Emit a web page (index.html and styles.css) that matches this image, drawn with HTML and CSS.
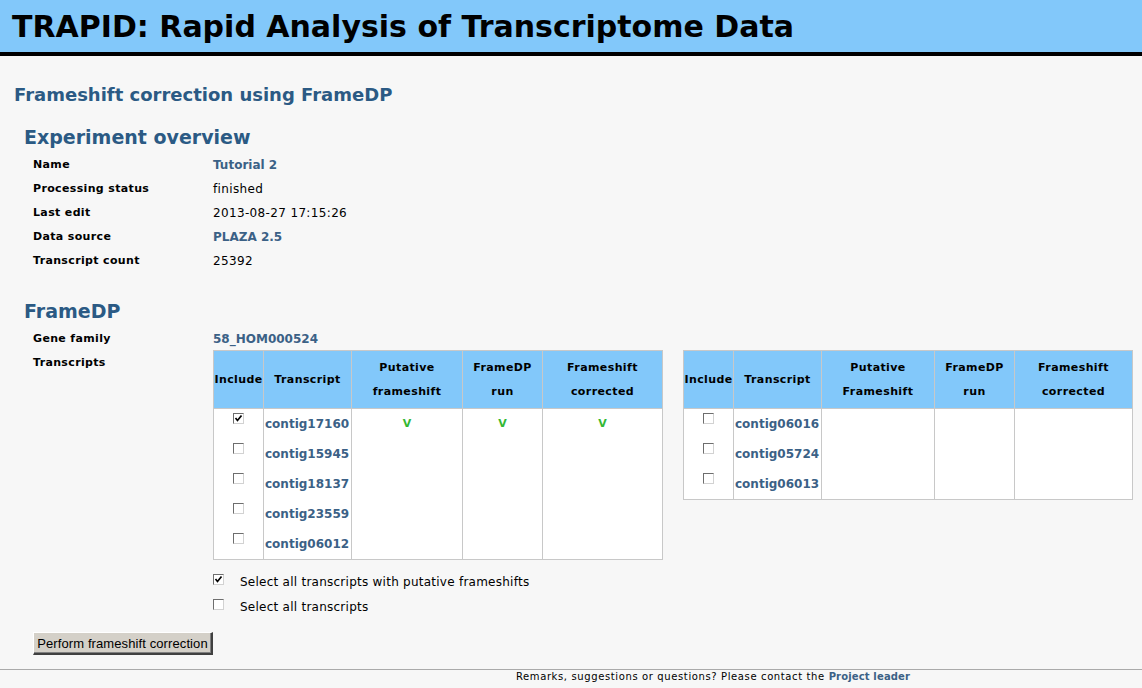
FILE: index.html
```html
<!DOCTYPE html>
<html>
<head>
<meta charset="utf-8">
<title>TRAPID</title>
<link rel="stylesheet" href="styles.css">
</head>
<body>
<div class="header"><h1 class="title">TRAPID: Rapid Analysis of Transcriptome Data</h1></div>
<div class="content">
  <h2 class="page-title">Frameshift correction using FrameDP</h2>
  <h3 class="section-title">Experiment overview</h3>
  <div class="info">
    <div class="label">Name</div><div class="value"><a class="link">Tutorial 2</a></div>
    <div class="label">Processing status</div><div class="value">finished</div>
    <div class="label">Last edit</div><div class="value">2013-08-27 17:15:26</div>
    <div class="label">Data source</div><div class="value"><a class="link">PLAZA 2.5</a></div>
    <div class="label">Transcript count</div><div class="value">25392</div>
  </div>
  <h3 class="section-title fdp">FrameDP</h3>
  <div class="info">
    <div class="label">Gene family</div><div class="value"><a class="link">58_HOM000524</a></div>
    <div class="label">Transcripts</div>
    <div class="value tables-cell">
      <div class="tables">
        <table class="tx">
          <colgroup><col class="c1"><col class="c2"><col class="c3a"><col class="c4"><col class="c5a"></colgroup>
          <thead><tr><th>Include</th><th>Transcript</th><th>Putative<br>frameshift</th><th>FrameDP<br>run</th><th>Frameshift<br>corrected</th></tr></thead>
          <tbody>
            <tr><td class="inc"><span class="cb checked"><svg viewBox="0 0 9 9" width="9" height="9"><path d="M1.5 4 L3.5 6.5 L7.5 1.5" fill="none" stroke="#000" stroke-width="1.7"/></svg></span></td><td><a class="link">contig17160</a></td><td class="ok">V</td><td class="ok">V</td><td class="ok">V</td></tr>
            <tr><td class="inc"><span class="cb"></span></td><td><a class="link">contig15945</a></td><td></td><td></td><td></td></tr>
            <tr><td class="inc"><span class="cb"></span></td><td><a class="link">contig18137</a></td><td></td><td></td><td></td></tr>
            <tr><td class="inc"><span class="cb"></span></td><td><a class="link">contig23559</a></td><td></td><td></td><td></td></tr>
            <tr><td class="inc"><span class="cb"></span></td><td><a class="link">contig06012</a></td><td></td><td></td><td></td></tr>
          </tbody>
        </table>
        <table class="tx">
          <colgroup><col class="c1"><col class="c2"><col class="c3b"><col class="c4"><col class="c5b"></colgroup>
          <thead><tr><th>Include</th><th>Transcript</th><th>Putative<br>Frameshift</th><th>FrameDP<br>run</th><th>Frameshift<br>corrected</th></tr></thead>
          <tbody>
            <tr><td class="inc"><span class="cb"></span></td><td><a class="link">contig06016</a></td><td></td><td></td><td></td></tr>
            <tr><td class="inc"><span class="cb"></span></td><td><a class="link">contig05724</a></td><td></td><td></td><td></td></tr>
            <tr><td class="inc"><span class="cb"></span></td><td><a class="link">contig06013</a></td><td></td><td></td><td></td></tr>
          </tbody>
        </table>
      </div>
      <div class="select-line first"><span class="cb checked"><svg viewBox="0 0 9 9" width="9" height="9"><path d="M1.5 4 L3.5 6.5 L7.5 1.5" fill="none" stroke="#000" stroke-width="1.7"/></svg></span><span class="sel-text">Select all transcripts with putative frameshifts</span></div>
      <div class="select-line"><span class="cb"></span><span class="sel-text">Select all transcripts</span></div>
    </div>
  </div>
  <div class="actions"><button class="btn">Perform frameshift correction</button></div>
</div>
<div class="footer">Remarks, suggestions or questions? Please contact the <a class="link strong">Project leader</a></div>
</body>
</html>
```
FILE: styles.css
```css
html, body {
  margin: 0;
  padding: 0;
  background: #f7f7f7;
  font-family: "DejaVu Sans", Verdana, sans-serif;
  font-size: 12px;
  color: #000;
}
.header {
  background: #82c8fa;
  height: 52px;
  border-bottom: 4px solid #000;
  padding-left: 12px;
  display: flex;
  align-items: center;
}
.title {
  margin: 0;
  font-family: "DejaVu Sans", sans-serif;
  font-weight: 700;
  font-size: 30px;
  line-height: 1;
  padding-top: 1px;
}
.content {
  padding: 0 0 0 14px;
}
.page-title {
  margin: 0;
  padding-top: 27px;
  font-size: 18px;
  line-height: 24px;
  color: #2b5a84;
  font-weight: bold;
}
.section-title {
  margin: 0;
  padding: 18px 0 0 10px;
  font-size: 19px;
  line-height: 24px;
  color: #2b5a84;
  font-weight: bold;
}
.section-title.fdp { padding-top: 26px; }
.info {
  display: grid;
  grid-template-columns: 180px auto;
  padding-left: 19px;
  margin-top: 4px;
}
.label {
  font-weight: bold;
  font-size: 11px;
  letter-spacing: 0.35px;
  line-height: 24px;
  height: 24px;
}
.value {
  line-height: 24px;
  letter-spacing: 0.35px;
}
.link {
  color: #3b6186;
  font-weight: bold;
  letter-spacing: 0;
  text-decoration: none;
}
.tables {
  display: flex;
  gap: 20px;
  align-items: flex-start;
  margin-top: -1px;
}
.tx {
  border-collapse: collapse;
  table-layout: fixed;
  width: 450px;
  background: #fff;
  border: 1px solid #c8c8c8;
  line-height: 24px;
  letter-spacing: 0;
}
.tx col.c1 { width: 50px; }
.tx col.c2 { width: 88px; }
.tx col.c3a { width: 111px; }
.tx col.c3b { width: 113px; }
.tx col.c4 { width: 80px; }
.tx col.c5a { width: 120px; }
.tx col.c5b { width: 118px; }
.tx th {
  background: #82c8fa;
  border: 1px solid #c8c8c8;
  font-weight: bold;
  font-size: 11px;
  letter-spacing: 0.4px;
  padding: 5px 0 4px;
  text-align: center;
  white-space: nowrap;
}
.tx td {
  border-left: 1px solid #c8c8c8;
  border-right: 1px solid #c8c8c8;
  height: 30px;
  padding: 0 1px;
  vertical-align: middle;
  white-space: nowrap;
}
.tx td.inc {
  vertical-align: top;
  text-align: center;
  padding-top: 4px;
  height: 26px;
}
.tx td.ok {
  color: #33b833;
  font-weight: bold;
  font-size: 11px;
  text-align: center;
}
.cb {
  display: inline-block;
  box-sizing: border-box;
  width: 11px;
  height: 11px;
  background: #fff;
  border-top: 1px solid #6e6e6e;
  border-left: 1px solid #6e6e6e;
  border-right: 1px solid #d2d2d2;
  border-bottom: 1px solid #d2d2d2;
  vertical-align: top;
  position: relative;
}
.cb svg {
  position: absolute;
  left: 0;
  top: 0;
}
.select-line {
  display: flex;
  align-items: center;
  height: 25px;
  letter-spacing: 0.25px;
}
.select-line.first { margin-top: 9px; }
.select-line .cb { margin-top: -4px; }
.sel-text { margin-left: 16px; }
.actions {
  padding: 13px 0 0 19px;
}
.btn {
  width: 180px;
  height: 23px;
  padding: 0;
  background: #d4d0c8;
  font-family: "Liberation Sans", Arial, sans-serif;
  font-size: 13px;
  letter-spacing: 0.1px;
  color: #000;
  border-top: 1px solid #ffffff;
  border-left: 1px solid #ffffff;
  border-right: 2px solid #404040;
  border-bottom: 2px solid #404040;
  box-shadow: inset -1px -1px 0 #808080;
  border-radius: 0;
}
.footer {
  margin-top: 14px;
  border-top: 1px solid #aaaaaa;
  padding-left: 284px;
  text-align: center;
  font-size: 10px;
  letter-spacing: 0.62px;
  line-height: 14px;
  height: 18px;
}
.footer .strong { font-weight: bold; letter-spacing: 0.15px; }
```
